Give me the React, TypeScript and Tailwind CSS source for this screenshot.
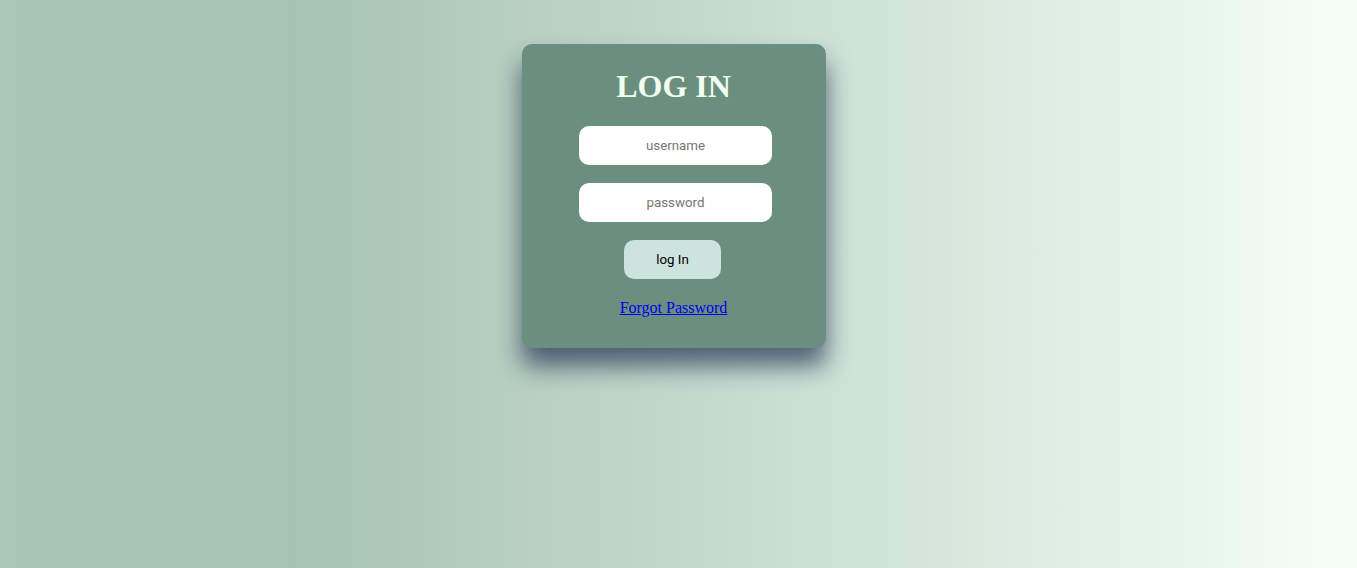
import React from 'react';

const App = () => {
  return (
    <div className="min-h-[568px] h-screen w-full bg-linear-to-r from-[#aac6b7] via-[#a6c3b3] via-22% to-[#f5fff8] flex justify-center items-start pt-[44px] pr-[10px]">
      <div className="w-[304px] h-[304px] bg-[#6b8f7e] rounded-[10px] shadow-[0_18px_24px_rgba(20,30,70,0.65)] flex flex-col items-center pt-[24px]">
        <h1 className="text-[32px] leading-[37px] font-bold text-[#f0fff0] font-['Liberation_Serif',serif]">
          LOG IN
        </h1>
        <form className="flex flex-col items-center mt-[21px] gap-[18px]" onSubmit={(e) => e.preventDefault()}>
          <input
            type="text"
            placeholder="username"
            className="ml-[4px] w-[193px] h-[39px] bg-white rounded-[10px] text-center text-[13.33px] font-['Roboto',sans-serif] placeholder:text-[#757575] outline-none"
          />
          <input
            type="password"
            placeholder="password"
            className="ml-[4px] w-[193px] h-[39px] bg-white rounded-[10px] text-center text-[13.33px] font-['Roboto',sans-serif] placeholder:text-[#757575] outline-none"
          />
          <button
            type="submit"
            className="mr-[2px] w-[97px] h-[39px] bg-[#cce3de] rounded-[10px] text-[13.33px] text-black font-['Roboto',sans-serif]"
          >
            log In
          </button>
        </form>
        <a href="#" className="mt-[20px] text-[16px] leading-[18px] text-[#0000ee] underline font-['Liberation_Serif',serif]">
          Forgot Password
        </a>
      </div>
    </div>
  );
};

export default App;
